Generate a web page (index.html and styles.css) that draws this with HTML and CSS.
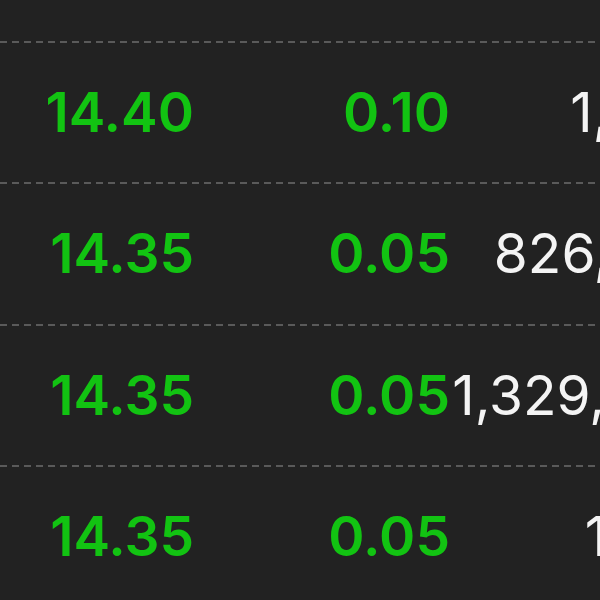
FILE: index.html
```html
<!DOCTYPE html>
<html lang="en">
<head>
    <meta charset="UTF-8">
    <title>Trades</title>
    <link rel="stylesheet" href="styles.css">
</head>
<body>
    <div class="viewport">
        <div class="trade-table">
            <div class="trade-row trade-row--top"></div>
            <div class="trade-row">
                <span class="price up">14.40</span>
                <span class="change up">0.10</span>
                <span class="volume">1,880</span>
            </div>
            <div class="trade-row">
                <span class="price up">14.35</span>
                <span class="change up">0.05</span>
                <span class="volume">826,470</span>
            </div>
            <div class="trade-row">
                <span class="price up">14.35</span>
                <span class="change up">0.05</span>
                <span class="volume">1,329,400</span>
            </div>
            <div class="trade-row">
                <span class="price up">14.35</span>
                <span class="change up">0.05</span>
                <span class="volume">1,100</span>
            </div>
        </div>
    </div>
</body>
</html>
```

FILE: styles.css
```css
* {
    box-sizing: border-box;
    margin: 0;
    padding: 0;
}
html, body {
    height: 100%;
}
body {
    background: #222222;
    font-family: Inter, "Noto Sans", sans-serif;
    overflow: hidden;
}
.viewport {
    width: 600px;
    height: 600px;
    overflow: hidden;
}
/* table rows */
.trade-table {
    width: 710px;
}
.trade-row {
    display: grid;
    grid-template-columns: 194px 256px 260px;
    align-items: center;
    height: 141.3px;
    padding-bottom: 2px;
    /* dashed divider */
    background-image: repeating-linear-gradient(to right, #5a5a5a 0 7px, transparent 7px 12px);
    background-size: 100% 2px;
    background-position: left bottom;
    background-repeat: no-repeat;
    font-size: 55px;
    line-height: 1;
    text-align: right;
}
.trade-row--top {
    height: 43px;
}
.up {
    color: #12c312;
    font-weight: 600;
}
.volume {
    color: #f4f4f4;
    font-weight: 400;
}
```
